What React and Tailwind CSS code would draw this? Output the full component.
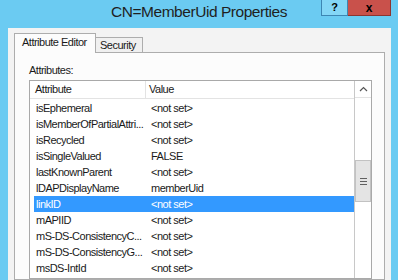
import React from 'react';

const rows = [
  { name: 'isEphemeral', value: '<not set>' },
  { name: 'isMemberOfPartialAttri...', value: '<not set>' },
  { name: 'isRecycled', value: '<not set>' },
  { name: 'isSingleValued', value: 'FALSE' },
  { name: 'lastKnownParent', value: '<not set>' },
  { name: 'lDAPDisplayName', value: 'memberUid' },
  { name: 'linkID', value: '<not set>', selected: true },
  { name: 'mAPIID', value: '<not set>' },
  { name: 'mS-DS-ConsistencyC...', value: '<not set>' },
  { name: 'mS-DS-ConsistencyG...', value: '<not set>' },
  { name: 'msDS-IntId', value: '<not set>' },
];

const ui = { fontFamily: '"Liberation Sans", Arial, sans-serif' };

export default function App() {
  return (
    <div className="w-[398px] h-[280px] overflow-hidden bg-[#6bcbf2] flex flex-col" style={ui}>
      {/* title bar */}
      <div className="relative h-[28px] shrink-0 flex items-center justify-center">
        <span className="text-[15.5px] tracking-[-0.45px] text-[#1f1f1f] leading-none -mt-[4px]">
          CN=MemberUid Properties
        </span>
        <div className="absolute top-0 right-[7px] flex">
          <div className="w-[27px] h-[16px] bg-[#84d6f6] border border-t-0 border-[#3d86b3] flex items-center justify-center text-[11px] font-bold text-black leading-none">
            ?
          </div>
          <div className="w-[43px] h-[16px] bg-[#c9514b] border border-t-0 border-l-0 border-[#8d3430] flex items-center justify-center text-[12px] font-bold text-black leading-none">
            x
          </div>
        </div>
      </div>

      {/* window body */}
      <div className="flex-1 ml-[8px] mr-[7px] bg-[#f3f3f3] pl-[6px] pr-[6px] pt-[5px] flex flex-col">
        {/* tabs */}
        <div className="flex items-end h-[19px] text-[11px] tracking-[-0.5px] text-[#1a1a1a]">
          <div className="relative z-10 w-[82px] h-[20px] -mb-[1px] bg-[#fcfcfc] border border-b-0 border-[#adadad] pl-[7px] pt-[2px] leading-[13px]">
            Attribute Editor
          </div>
          <div className="w-[47px] h-[15px] bg-[#f0f0f0] border border-l-0 border-b-0 border-[#adadad] pl-[4px] pt-[1px] leading-[13px]">
            Security
          </div>
        </div>

        {/* tab panel */}
        <div className="flex-1 bg-[#fcfcfc] border border-[#adadad] pl-[14px] pr-[12px] pt-[11px] flex flex-col">
          <div className="text-[11px] tracking-[-0.5px] text-[#1a1a1a] leading-[13px] h-[16px]">Attributes:</div>

          <div className="flex-1 bg-white border border-[#a9a9a9] flex text-[11px] tracking-[-0.5px] text-[#1a1a1a]">
            <div className="flex-1 flex flex-col">
              <div className="h-[18px] flex items-center border-b border-[#e3e3e3] shrink-0">
                <div className="w-[116px] pl-[5px] border-r border-[#e3e3e3] h-full flex items-center">Attribute</div>
                <div className="pl-[3px]">Value</div>
              </div>
              <div className="pl-[4px] pt-[1px] flex flex-col">
                {rows.map((r) => (
                  <div
                    key={r.name}
                    className={`h-[16px] flex items-center leading-none ${r.selected ? 'bg-[#3399ff] text-white' : ''}`}
                  >
                    <div className="w-[114px] pl-[2px] whitespace-nowrap">{r.name}</div>
                    <div className="pl-[3px] whitespace-nowrap">{r.value}</div>
                  </div>
                ))}
              </div>
            </div>

            {/* scrollbar */}
            <div className="w-[17px] border-l border-[#c8c8c8] bg-white flex flex-col">
              <div className="h-[17px] border-b border-[#e3e3e3] flex items-center justify-center">
                <svg width="9" height="6" viewBox="0 0 9 6">
                  <path d="M1 5 L4.5 1.5 L8 5" fill="none" stroke="#555" strokeWidth="1.2" />
                </svg>
              </div>
              <div className="h-[62px]" />
              <div className="h-[42px] bg-[#e4e4e4] border border-[#c2c2c2] flex flex-col items-center justify-center gap-[2px]">
                <div className="w-[7px] h-[1px] bg-[#606060]" />
                <div className="w-[7px] h-[1px] bg-[#606060]" />
                <div className="w-[7px] h-[1px] bg-[#606060]" />
              </div>
            </div>
          </div>
        </div>
      </div>
    </div>
  );
}
